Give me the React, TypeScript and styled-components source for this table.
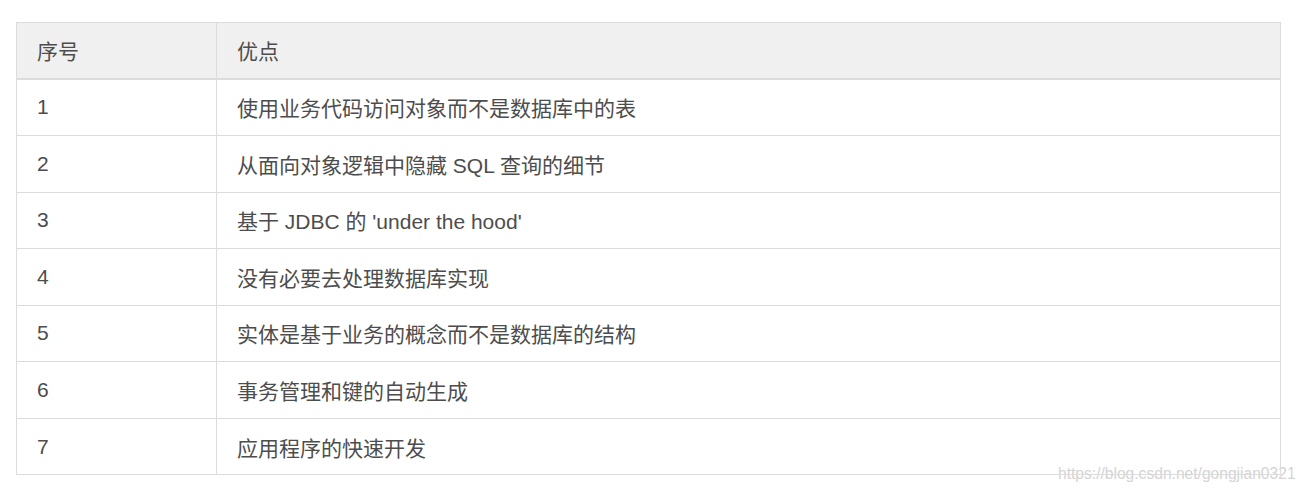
import styled, { createGlobalStyle } from "styled-components";

const GlobalStyle = createGlobalStyle`
  body {
    margin: 0;
    background: #fff;
    font-family: "Liberation Sans", "Noto Sans CJK SC", Arial, sans-serif;
  }
`;

const Page = styled.div`
  position: relative;
  width: 1309px;
  height: 492px;
  padding: 22px 28px 0 16px;
  box-sizing: border-box;
`;

const Table = styled.table`
  width: 1265px;
  border-collapse: collapse;
  table-layout: fixed;
  color: #4d4d4d;
  font-size: 21px;
`;

const HeadCell = styled.th<{ w?: number }>`
  box-sizing: border-box;
  width: ${(props) => (props.w ? props.w + "px" : "auto")};
  height: 56px;
  padding: 0 0 0 20px;
  text-align: left;
  font-weight: normal;
  background-color: #f0f0f0;
  border: 1px solid #dcdcdc;
  border-bottom: 2px solid #dcdcdc;
`;

const Cell = styled.td`
  height: 55.55px;
  padding: 0 0 0 20px;
  border: 1px solid #dcdcdc;
  background-color: #fff;
`;

const Watermark = styled.div`
  position: absolute;
  left: 1058px;
  top: 465px;
  font-family: "Liberation Sans", Arial, sans-serif;
  font-size: 15.6px;
  color: #d4d4d4;
  text-shadow: 0 0 1px #fff;
`;

const rows = [
  "使用业务代码访问对象而不是数据库中的表",
  "从面向对象逻辑中隐藏 SQL 查询的细节",
  "基于 JDBC 的 'under the hood'",
  "没有必要去处理数据库实现",
  "实体是基于业务的概念而不是数据库的结构",
  "事务管理和键的自动生成",
  "应用程序的快速开发",
];

function App() {
  return (
    <Page>
      <GlobalStyle />
      <Table>
        <thead>
          <tr>
            <HeadCell w={200}>序号</HeadCell>
            <HeadCell>优点</HeadCell>
          </tr>
        </thead>
        <tbody>
          {rows.map((text, i) => (
            <tr key={i}>
              <Cell>{i + 1}</Cell>
              <Cell>{text}</Cell>
            </tr>
          ))}
        </tbody>
      </Table>
      <Watermark>https://blog.csdn.net/gongjian0321</Watermark>
    </Page>
  );
}

export default App;
